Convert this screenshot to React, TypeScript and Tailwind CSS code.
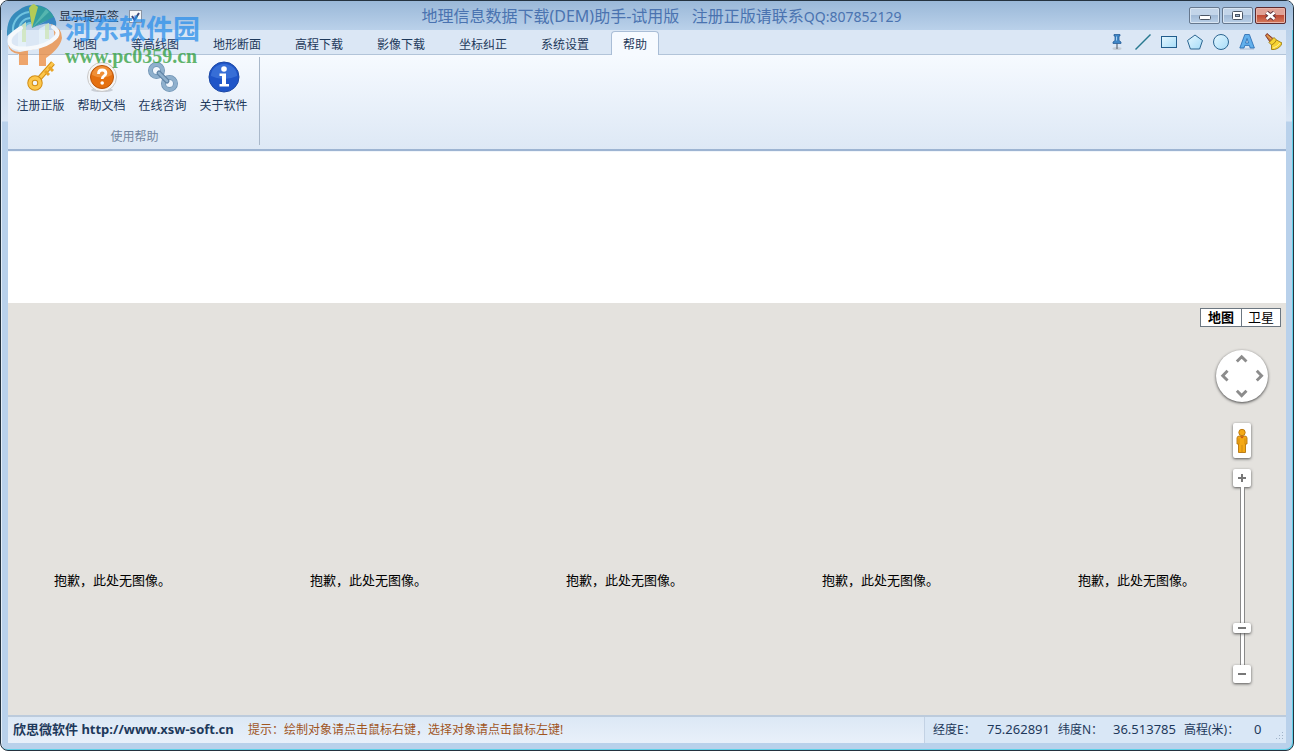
import { useState } from "react";
import type { ReactNode } from "react";

const TABS = ["地图", "等高线图", "地形断面", "高程下载", "影像下载", "坐标纠正", "系统设置", "帮助"];

export default function App() {
  const [tab, setTab] = useState("帮助");

  return (
    <div className="flex h-screen flex-col overflow-hidden rounded-lg border border-[#24323f] bg-[linear-gradient(#bad1ea_30px,#dbe7f5_120px,#b9d1eb_121px)] font-['Noto_Sans','Noto_Sans_CJK_SC',sans-serif] text-xs text-[#1e395b] shadow-[inset_-1px_-1px_0_#5fd0e8,inset_1px_1px_0_#e4eef8]">
      <TitleBar />

      <div className="mx-[7px] mb-[7px] flex min-h-0 flex-1 flex-col">
        {/* Tabs + drawing tools */}
        <div className="flex h-[25px] shrink-0 items-end justify-between border-b border-[#b2c4d9] bg-[#dbe7f5]">
          <div role="tablist" className="-mb-px ml-[53px] flex gap-2.5">
            {TABS.map((name) => (
              <button
                key={name}
                role="tab"
                aria-selected={tab === name}
                onClick={() => setTab(name)}
                className={
                  tab === name
                    ? "h-6 rounded-t-sm border border-b-0 border-[#a9bdd6] bg-[#f6faff] px-[11px] pt-0.5 leading-5"
                    : "h-6 px-3 pt-[3px] leading-5"
                }
              >
                {name}
              </button>
            ))}
          </div>
          <DrawTools />
        </div>

        <Ribbon />

        <div className="h-[151px] shrink-0 bg-white" />
        <MapView />
        <StatusBar />
      </div>

      <Watermark />
    </div>
  );
}

function TitleBar() {
  return (
    <header className="flex h-[29px] shrink-0 items-center bg-linear-to-b from-[#9ab8d8] to-[#bad1ea] pr-[7px] pl-[58px]">
      <label className="flex items-center gap-2.5 pt-0.5 text-[#1e3044]">
        显示提示签
        <span className="relative flex">
          <input
            type="checkbox"
            defaultChecked
            className="peer size-[13px] appearance-none border border-[#8a94a3] bg-[#f4f6f8]"
          />
          <svg
            viewBox="0 0 13 13"
            className="pointer-events-none absolute inset-0 size-[13px] fill-none stroke-[#3b4a78] stroke-2 opacity-0 peer-checked:opacity-100"
          >
            <path d="M3 6l2.500 4L10 3" />
          </svg>
        </span>
      </label>
      <h1 className="flex-1 pr-2 text-center text-base leading-6 whitespace-pre text-[#4a73b0]">
        地理信息数据下载(DEM)助手-试用版{"   "}注册正版请联系<span className="text-sm">QQ:807852129</span>
      </h1>
      <div className="flex gap-0.5">
        <WindowButton label="最小化">
          <rect x="10.500" y="7.500" width="11" height="4" rx="1" fill="#fff" stroke="#4b5665" />
        </WindowButton>
        <WindowButton label="最大化">
          <rect x="10.500" y="3.500" width="10" height="8" rx="1" fill="#fff" stroke="#4b5665" />
          <rect x="13.500" y="6.500" width="4" height="2" fill="#9db3cc" stroke="#4b5665" />
        </WindowButton>
        <WindowButton label="关闭" danger>
          <path d="M11.500 4.500l8 6.500M19.500 4.500l-8 6.500" stroke="#5a3038" strokeWidth="4.500" />
          <path d="M11.500 4.500l8 6.500M19.500 4.500l-8 6.500" stroke="#fff" strokeWidth="2.600" />
        </WindowButton>
      </div>
    </header>
  );
}

function WindowButton({ label, danger, children }: { label: string; danger?: boolean; children: ReactNode }) {
  return (
    <button
      aria-label={label}
      className={
        danger
          ? "h-[17px] w-[31px] rounded-xs border border-[#5c2a2e] bg-linear-to-b from-[#e0a296] from-45% via-[#c04a34] via-50% to-[#d47a5c] shadow-[inset_0_0_0_1px_#e8b4a8]"
          : "h-[17px] w-[31px] rounded-xs border border-[#66788e] bg-linear-to-b from-[#c3d5e9] from-45% via-[#a2bbd7] via-50% to-[#b9cfe7] shadow-[inset_0_0_0_1px_#d8e5f2]"
      }
    >
      <svg viewBox="0 0 31 15" className="-mx-px h-[15px] w-[31px] max-w-none fill-none">
        {children}
      </svg>
    </button>
  );
}

function Tool({ label, children }: { label: string; children: ReactNode }) {
  return (
    <button aria-label={label} className="flex h-6 w-[26px] items-center justify-center">
      <svg viewBox="0 0 18 18" className="size-[18px] fill-none">
        {children}
      </svg>
    </button>
  );
}

function DrawTools() {
  return (
    <div className="flex">
      <svg className="size-0">
        <defs>
          <linearGradient id="sky" x1="0" y1="0" x2="1" y2="1">
            <stop offset="0" stopColor="#e6f7ff" />
            <stop offset="1" stopColor="#a5dcf8" />
          </linearGradient>
        </defs>
      </svg>
      <Tool label="标记">
        <ellipse cx="9" cy="15.500" rx="4.500" ry="1.500" fill="#c3ccd6" />
        <path d="M9 10v6" stroke="#5d6a78" strokeWidth="1.200" />
        <path d="M6 1.500h6v1.500h-1v4.500l2 1.500v1.500H5V9l2-1.500V3H6z" fill="#3f86c6" stroke="#2a5f99" strokeWidth=".8" />
        <path d="M8.500 3.500v4" stroke="#a5d0f2" />
      </Tool>
      <Tool label="线">
        <path d="M1.500 16.500l15-15" stroke="#27798f" strokeWidth="1.400" />
      </Tool>
      <Tool label="矩形">
        <rect x="1.500" y="3.500" width="15" height="11" fill="url(#sky)" stroke="#215d8c" />
      </Tool>
      <Tool label="多边形">
        <path d="M9 2l7.500 5.500-2.900 8.500H4.400L1.500 7.500z" fill="url(#sky)" stroke="#2b6590" />
      </Tool>
      <Tool label="圆">
        <circle cx="9" cy="9" r="7.500" fill="url(#sky)" stroke="#2b6590" />
      </Tool>
      <Tool label="文字">
        <path d="M2 16h14" stroke="#b9c9dc" strokeWidth="1.500" />
        <path
          d="M6.800 1.500h4.600l5 13.500h-4.200l-.8-2.600H6.800L6 15H1.800zM9 5.500L7.600 10h2.900z"
          fill="#62b0ec"
          stroke="#2567ae"
          strokeWidth=".8"
        />
      </Tool>
      <Tool label="清除">
        <path d="M1.500 2.500l1.500-2L9 5.500 6 9z" fill="#c9773a" stroke="#7c2f26" strokeWidth=".9" />
        <path d="M3 2.500L7.500 6.500" stroke="#f2b45c" />
        <path d="M5 9.500L10 4.500l2.500 2.500 5.500 3q-1.500 5-7.500 6.500H7.500L7.500 12z" fill="#f7d433" stroke="#9c7a10" strokeWidth=".9" />
        <path d="M7.500 12q3-1 5-5" stroke="#a17c12" strokeWidth=".9" />
        <path d="M9 15q5-1.500 7-5" stroke="#fbee9a" />
      </Tool>
    </div>
  );
}

function RibbonButton({ label, children }: { label: string; children: ReactNode }) {
  return (
    <button className="flex w-[61px] flex-col items-center gap-[3px]">
      <svg viewBox="0 0 32 32" className="size-8 fill-none">
        {children}
      </svg>
      <span className="leading-5">{label}</span>
    </button>
  );
}

function Ribbon() {
  return (
    <div className="flex h-[97px] shrink-0 border-b border-[#f0f5fb] bg-linear-to-b from-[#f6faff] to-[#dde8f5] shadow-[inset_0_-2px_0_#9db4d2]">
      <div className="mt-0.5 mb-1.5 flex w-[252px] flex-col border-r border-[#a9b8ca] pt-1 pl-0.5">
        <div className="flex">
          <RibbonButton label="注册正版">
            <path d="M13 19L28 2" stroke="#d28d14" strokeWidth="5" />
            <path d="M13 19L28 2" stroke="#fcc64b" strokeWidth="3" />
            <path d="M24 6l4 4M20 10l4 4" stroke="#e9a528" strokeWidth="3" />
            <circle cx="10" cy="22" r="5" stroke="#d28d14" strokeWidth="5.500" />
            <circle cx="10" cy="22" r="5" stroke="#fcc64b" strokeWidth="3.500" />
          </RibbonButton>
          <RibbonButton label="帮助文档">
            <ellipse cx="16" cy="29" rx="11" ry="2" fill="#c9ced6" />
            <circle cx="16" cy="16" r="14.500" fill="#f5f5f5" stroke="#c9c9c9" />
            <circle cx="16" cy="16" r="11.500" fill="#e5700f" stroke="#b9540a" />
            <path d="M6 14a10 9 0 0 1 20 0q-10 5-20 0z" fill="#f6a452" opacity=".6" />
            <path d="M12.500 13q0-4 3.700-4t3.700 3.300c0 2.700-3.700 2.700-3.700 5.700" stroke="#fff" strokeWidth="2.800" />
            <circle cx="16.200" cy="22" r="1.800" fill="#fff" />
          </RibbonButton>
          <RibbonButton label="在线咨询">
            <circle cx="9.500" cy="9.500" r="6" stroke="#6f93b4" strokeWidth="5" />
            <circle cx="22.500" cy="22.500" r="6" stroke="#6f93b4" strokeWidth="5" />
            <circle cx="9.500" cy="9.500" r="6" stroke="#8fb0cd" strokeWidth="3.500" />
            <circle cx="22.500" cy="22.500" r="6" stroke="#8fb0cd" strokeWidth="3.500" />
            <path d="M12 12l8 8" stroke="#5f83a5" strokeWidth="5" strokeLinecap="round" />
            <path d="M12 12l8 8" stroke="#8fb0cd" strokeWidth="2.500" strokeLinecap="round" />
          </RibbonButton>
          <RibbonButton label="关于软件">
            <circle cx="16" cy="16" r="15" fill="#1f55c8" stroke="#1b47a4" />
            <path d="M3 15a13 12 0 0 1 26 0q-13 6-26 0z" fill="#5d94ec" opacity=".4" />
            <circle cx="16" cy="8" r="2.800" fill="#fff" />
            <path d="M11.500 12.500H18v10.500h3V25.500H11.500V23H14v-8h-2.500z" fill="#fff" />
          </RibbonButton>
        </div>
        <div className="mt-auto text-center leading-4 text-[#7386a0]">使用帮助</div>
      </div>
    </div>
  );
}

function MapView() {
  return (
    <main className="relative min-h-0 flex-1 overflow-hidden bg-[#e4e2de]">
      {/* missing tiles */}
      <div className="flex pt-[267px] pl-[46px] text-[13px] leading-5 text-black">
        {[0, 1, 2, 3, 4].map((i) => (
          <div key={i} className="w-64 shrink-0">
            抱歉，此处无图像。
          </div>
        ))}
      </div>

      <div className="absolute top-[5px] right-[5px] flex flex-col items-end">
        <div className="flex h-[19px] border border-[#6b7680] bg-white text-[13px] leading-4 text-black">
          <button className="w-10 pb-px font-bold">地图</button>
          <button className="w-[39px] border-l border-[#6b7680] pb-px">卫星</button>
        </div>

        <div className="mt-[23px] mr-3 flex w-[54px] flex-col items-center">
          <PanControl />
          <button
            aria-label="街景"
            className="mt-[21px] flex h-[35px] w-[18px] items-center justify-center rounded-xs bg-white shadow-[0_1px_3px_#555]"
          >
            <svg viewBox="0 0 12 26" className="h-[26px] w-3">
              <path
                d="M3.500 8h5Q11 8 11 10v6H9.500v8.500h-7V16H1v-6q0-2 2.500-2z"
                fill="#f5a914"
                stroke="#b6740b"
                strokeWidth=".9"
              />
              <path d="M4 8.500h4L6 10.500z" fill="#c84f12" />
              <path d="M3 10.500V16M9 10.500V16M6 17v7" stroke="#c4820f" strokeWidth=".7" />
              <circle cx="6" cy="4.500" r="3.200" fill="#f5a914" stroke="#b6740b" strokeWidth=".9" />
            </svg>
          </button>
          <ZoomButton label="放大" plus />
          <input
            type="range"
            aria-label="缩放级别"
            min={0}
            max={21}
            defaultValue={4}
            className="h-[178px] w-[18px] appearance-none bg-[linear-gradient(90deg,#8a8a8a_1px,#fff_1px,#fff_4px,#8a8a8a_4px)] bg-size-[5px_100%] bg-center bg-no-repeat [direction:rtl] [writing-mode:vertical-lr] [&::-webkit-slider-thumb]:h-2.5 [&::-webkit-slider-thumb]:w-[18px] [&::-webkit-slider-thumb]:appearance-none [&::-webkit-slider-thumb]:rounded-xs [&::-webkit-slider-thumb]:bg-white [&::-webkit-slider-thumb]:bg-[linear-gradient(#777,#777)] [&::-webkit-slider-thumb]:bg-size-[8px_2px] [&::-webkit-slider-thumb]:bg-center [&::-webkit-slider-thumb]:bg-no-repeat [&::-webkit-slider-thumb]:shadow-[0_1px_3px_#555]"
          />
          <ZoomButton label="缩小" />
        </div>
      </div>
    </main>
  );
}

function PanControl() {
  return (
    <div className="grid size-[52px] grid-cols-3 grid-rows-3 rounded-full bg-white shadow-[0_1px_3px_#444]">
      <PanArrow label="向上" place="col-start-2 row-start-1" d="M4 12l5-5 5 5" />
      <PanArrow label="向左" place="col-start-1 row-start-2" d="M12 4L7 9l5 5" />
      <PanArrow label="向右" place="col-start-3 row-start-2" d="M6 4l5 5-5 5" />
      <PanArrow label="向下" place="col-start-2 row-start-3" d="M4 6l5 5 5-5" />
    </div>
  );
}

function PanArrow({ label, place, d }: { label: string; place: string; d: string }) {
  return (
    <button aria-label={label} className={place}>
      <svg viewBox="0 0 18 18" className="size-full fill-none stroke-[#8c8c8c] stroke-3">
        <path d={d} />
      </svg>
    </button>
  );
}

function ZoomButton({ label, plus }: { label: string; plus?: boolean }) {
  return (
    <button
      aria-label={label}
      className={
        plus
          ? "mt-[11px] size-[18px] rounded-xs bg-white shadow-[0_1px_3px_#555]"
          : "size-[18px] rounded-xs bg-white shadow-[0_1px_3px_#555]"
      }
    >
      <svg viewBox="0 0 18 18" className="size-[18px] stroke-[#777] stroke-2">
        <path d={plus ? "M5 9h8M9 5v8" : "M5 9h8"} />
      </svg>
    </button>
  );
}

function StatusBar() {
  return (
    <footer className="flex h-7 shrink-0 items-center border-t-2 border-[#bccbdc] bg-linear-to-b from-[#dce8f5] to-[#e9f0fa] whitespace-nowrap">
      <a href="http://www.xsw-soft.cn" className="ml-[5px] w-[225px] text-[13px] font-bold">
        欣思微软件 http://www.xsw-soft.cn
      </a>
      <span className="ml-2.5 text-[#a0561f]">提示：绘制对象请点击鼠标右键，选择对象请点击鼠标左键!</span>
      <div className="relative ml-auto flex h-full w-[362px] items-center border-l border-[#c3d2e4] bg-[#d9e7f6] pl-2">
        <span className="w-[54px]">经度E：</span>
        <span className="w-[71px] text-[13px]">75.262891</span>
        <span className="w-[55px]">纬度N：</span>
        <span className="w-[71px] text-[13px]">36.513785</span>
        <span className="w-[70px]">高程(米)：</span>
        <span className="text-[13px]">0</span>
        <svg viewBox="0 0 9 9" className="absolute right-0.5 bottom-0.5 size-[9px] fill-[#9fb2c8]">
          <path d="M7 0h1v1H7zM4 3h1v1H4zM7 3h1v1H7zM1 6h1v1H1zM4 6h1v1H4zM7 6h1v1H7z" />
        </svg>
      </div>
    </footer>
  );
}

function Watermark() {
  return (
    <div className="pointer-events-none absolute top-[3px] left-1 flex opacity-75">
      <svg viewBox="0 0 60 64" className="h-16 w-[60px]">
        {/* globe */}
        <path d="M3 33Q2 14 15 7q6-5 15-5 14 0 20 12l2 8Q40 15 22 22 8 28 3 33z" fill="#0f78ae" />
        <path d="M30 2q14 1 20 12l-22 11z" fill="#0c8f8a" />
        <path d="M50 14q3 5 2 9-8-6-24 2z" fill="#1270b8" />
        <path d="M25 5q3-4 5-4l4 3-6 21z" fill="#b9cf2a" />
        <path d="M28 25L42 6l3 3z" fill="#4fc0a8" opacity=".7" />
        <path
          d="M9 29a18 18 0 0 1 16-20M15 27a12 12 0 0 1 11-12M21 24a6 6 0 0 1 6-4"
          fill="none"
          stroke="#5cc3e0"
          strokeWidth="2"
        />
        {/* towers */}
        <path d="M14 34V25l8-6v40h-8zM35 26l10-6v32l-10-6z" fill="#e9f6fb" opacity=".85" />
        <path d="M18 22l4-3v20h-4zM41 22l4-2v16h-4z" fill="#c6e29a" opacity=".7" />
        {/* orbit */}
        <path d="M47 21q11 4 11 14-2 12-22 24 2-4 1-7 12-8 13-18 1-7-3-13z" fill="#ed8a3c" />
        <path d="M4 41q3 8 12 8l20-4q12-5 16-12-2 10-10 16v14h-7V46l-11-2v18H15V51Q5 50 4 41z" fill="#ed8a3c" />
        <path
          d="M49 24q8 5 2 11-8 8-24 10-17 2-21-4-3-8 11-16"
          fill="none"
          stroke="#fff"
          strokeWidth="4"
          strokeLinecap="round"
        />
      </svg>
      <div className="ml-px pt-2.5">
        <div className="h-[31px] text-[27px] leading-8 font-bold text-[#2c8fea]">河东软件园</div>
        <div className="font-['Liberation_Serif',serif] text-xl leading-6 font-bold text-[#2f9e3c]">www.pc0359.cn</div>
      </div>
    </div>
  );
}
